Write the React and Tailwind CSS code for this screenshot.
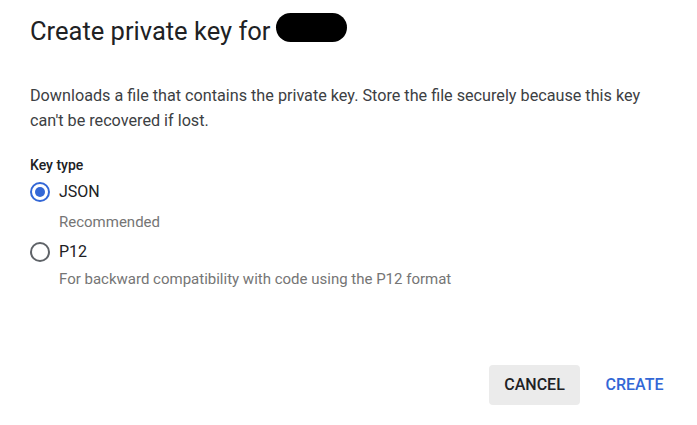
import React from "react";

function Radio({ checked }) {
  return (
    <span
      className={
        "flex h-[20px] w-[20px] shrink-0 items-center justify-center rounded-full border-2 " +
        (checked ? "border-[#3367d6]" : "border-[#5f6368]")
      }
    >
      {checked && <span className="h-[10px] w-[10px] rounded-full bg-[#3367d6]" />}
    </span>
  );
}

export default function App() {
  return (
    <div
      className="flex h-[425px] w-[697px] flex-col bg-white"
      style={{ fontFamily: "Roboto, 'Liberation Sans', sans-serif" }}
    >
      <div className="mt-[15px] flex items-start px-[30px]">
        <h1 className="text-[25.5px] leading-[32px] font-normal text-[#202124]">Create private key for</h1>
        <span className="ml-[6px] mt-[-2px] h-[29px] w-[71px] rounded-full bg-black" />
      </div>

      <p className="mt-[36px] px-[30px] text-[16.2px] leading-[25px] text-[#3c4043]">
        Downloads a file that contains the private key. Store the file securely because this key
        <br />
        can't be recovered if lost.
      </p>

      <div className="mt-[22px] px-[30px]">
        <div className="text-[14px] leading-[20px] font-medium text-[#202124]">Key type</div>

        <div className="mt-[5px] flex h-[24px] items-center gap-[9px]">
          <Radio checked />
          <span className="text-[16px] leading-[24px] text-[#202124]">JSON</span>
        </div>
        <div className="mt-[8px] pl-[29px] text-[15px] leading-[20px] text-[#757575]">Recommended</div>

        <div className="mt-[8px] flex h-[24px] items-center gap-[9px]">
          <Radio />
          <span className="text-[16px] leading-[24px] text-[#202124]">P12</span>
        </div>
        <div className="mt-[5px] pl-[29px] text-[15px] leading-[20px] text-[#757575]">
          For backward compatibility with code using the P12 format
        </div>
      </div>

      <div className="mt-auto flex justify-end gap-[11px] pb-[20px] pr-[19px]">
        <button className="h-[40px] w-[91px] rounded-[4px] bg-[#ebebeb] text-[16px] font-medium text-[#202124]">
          CANCEL
        </button>
        <button className="h-[40px] w-[87px] rounded-[4px] text-[16px] font-medium text-[#3367d6]">
          CREATE
        </button>
      </div>
    </div>
  );
}
